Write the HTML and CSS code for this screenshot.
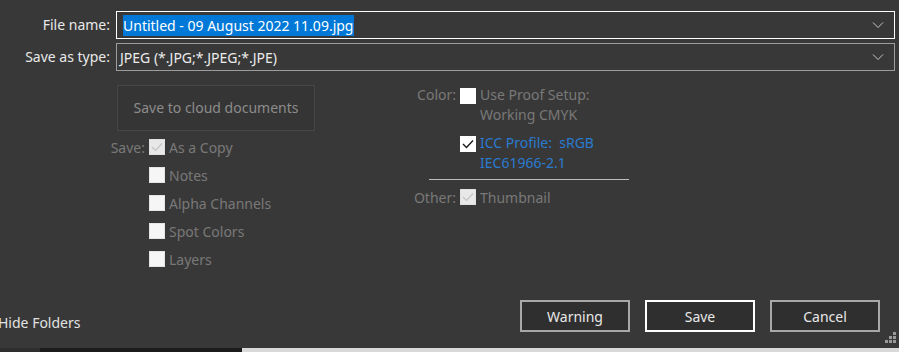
FILE: index.html
```html
<!DOCTYPE html>
<html>
<head>
  <title>Save As</title>
  <link rel="stylesheet" href="styles.css">
</head>
<body>

  <div class="dialog">

    <div class="file-fields">
      <label class="field-label" for="fileName">File name:</label>
      <div class="combo combo-focus" id="fileName">
        <span class="selected-text">Untitled - 09 August 2022 11.09.jpg</span>
        <svg class="chevron" width="12" height="8" viewBox="0 0 12 8"><path d="M1 1.5 L6 6.5 L11 1.5" fill="none" stroke="#c8c8c8" stroke-width="1"/></svg>
      </div>

      <label class="field-label" for="fileType">Save as type:</label>
      <div class="combo" id="fileType">
        <span class="combo-text">JPEG (*.JPG;*.JPEG;*.JPE)</span>
        <svg class="chevron" width="12" height="8" viewBox="0 0 12 8"><path d="M1 1.5 L6 6.5 L11 1.5" fill="none" stroke="#c8c8c8" stroke-width="1"/></svg>
      </div>
    </div>

    <div class="options">

      <div class="left-col">
        <div class="cloud-btn">Save to cloud documents</div>

        <div class="opt-grid">
          <span class="opt-label">Save:</span>
          <span class="box box-disabled-checked"><svg width="12" height="10" viewBox="0 0 12 10"><path d="M1 5 L4.5 8.5 L11 1.5" fill="none" stroke="#c4c4c4" stroke-width="1.2"/></svg></span>
          <span class="opt-text">As a Copy</span>

          <span></span>
          <span class="box"></span>
          <span class="opt-text">Notes</span>

          <span></span>
          <span class="box"></span>
          <span class="opt-text">Alpha Channels</span>

          <span></span>
          <span class="box"></span>
          <span class="opt-text">Spot Colors</span>

          <span></span>
          <span class="box"></span>
          <span class="opt-text">Layers</span>
        </div>
      </div>

      <div class="right-col">
        <div class="opt-grid tall">
          <span class="opt-label">Color:</span>
          <span class="box box-white"></span>
          <span class="opt-text">Use Proof Setup:<br>Working CMYK</span>

          <span></span>
          <span class="box box-white box-checked"><svg width="12" height="10" viewBox="0 0 12 10"><path d="M1 5 L4.5 8.5 L11 1.5" fill="none" stroke="#1a1a1a" stroke-width="1.4"/></svg></span>
          <span class="opt-text link">ICC Profile:&nbsp; sRGB<br>IEC61966-2.1</span>
        </div>

        <div class="separator"></div>

        <div class="opt-grid other-row">
          <span class="opt-label">Other:</span>
          <span class="box box-disabled-checked"><svg width="12" height="10" viewBox="0 0 12 10"><path d="M1 5 L4.5 8.5 L11 1.5" fill="none" stroke="#c4c4c4" stroke-width="1.2"/></svg></span>
          <span class="opt-text">Thumbnail</span>
        </div>
      </div>

    </div>

    <div class="footer">
      <span class="hide-folders">Hide Folders</span>
      <div class="buttons">
        <button class="btn">Warning</button>
        <button class="btn btn-default">Save</button>
        <button class="btn">Cancel</button>
      </div>
      <svg class="grip" width="12" height="12" viewBox="0 0 12 12" fill="#9a9a9a">
        <rect x="8" y="0" width="3" height="3"/>
        <rect x="4" y="4" width="3" height="3"/>
        <rect x="8" y="4" width="3" height="3"/>
        <rect x="0" y="8" width="3" height="3"/>
        <rect x="4" y="8" width="3" height="3"/>
        <rect x="8" y="8" width="3" height="3"/>
      </svg>
    </div>

    <div class="taskbar">
      <span class="tb-a"></span>
      <span class="tb-b"></span>
      <span class="tb-c"></span>
    </div>

  </div>

</body>
</html>
```

FILE: styles.css
```css
body {
  margin: 0;
  background: #383838;
  font-family: "Noto Sans", "Open Sans", sans-serif;
  font-size: 14px;
  color: #e6e6e6;
  overflow: hidden;
}

.dialog {
  height: 352px;
  display: flex;
  flex-direction: column;
}

/* File name / type rows */
.file-fields {
  display: grid;
  grid-template-columns: 110px 779px;
  column-gap: 6px;
  row-gap: 4px;
  padding-top: 11px;
}

.field-label {
  text-align: right;
  line-height: 28px;
  color: #e8e8e8;
}

.combo {
  height: 28px;
  box-sizing: border-box;
  border: 1px solid #9c9c9c;
  display: flex;
  align-items: center;
  padding: 0 10px 0 3px;
  background: #383838;
}

.combo-focus {
  border-color: #ffffff;
  padding-left: 6px;
}

.selected-text {
  background: #0078d7;
  color: #ffffff;
  line-height: 21px;
  padding-right: 1px;
}

.combo-text {
  color: #ececec;
}

.chevron {
  margin-left: auto;
}

/* Options area */
.options {
  display: flex;
  margin-top: 14px;
}

.left-col {
  width: 400px;
}

.cloud-btn {
  margin-left: 117px;
  width: 198px;
  height: 46px;
  box-sizing: border-box;
  border: 1px solid #474747;
  background: #353535;
  color: #8c8c8c;
  display: flex;
  align-items: center;
  justify-content: center;
  padding-bottom: 2px;
  margin-bottom: 2px;
}

.opt-grid {
  display: grid;
  grid-template-columns: 55px 16px auto;
  column-gap: 4px;
  grid-auto-rows: 28px;
  align-items: center;
  margin-left: 90px;
  color: #787878;
}

.right-col .opt-grid {
  margin-left: 0;
  column-gap: 4px;
  grid-template-columns: 56px 16px auto;
}

.opt-grid.tall {
  grid-auto-rows: auto;
  row-gap: 8px;
  align-items: start;
}

.opt-grid.tall .opt-text,
.opt-grid.tall .opt-label {
  line-height: 20px;
}

.opt-grid.tall .box {
  margin-top: 3px;
}

.opt-label {
  text-align: right;
}

.opt-text {
  white-space: nowrap;
}

.link {
  color: #2a7bd0;
}

.box {
  width: 16px;
  height: 16px;
  box-sizing: border-box;
  border: 1px solid #e4e4e4;
  background: #f6f6f6;
  display: flex;
  align-items: center;
  justify-content: center;
}

.box-white {
  background: #ffffff;
  border-color: #ffffff;
}

.box-disabled-checked {
  background: #e8e8e8;
  border-color: #e0e0e0;
}

.separator {
  width: 200px;
  height: 1px;
  background: #bdbdbd;
  margin: 6px 0 0 29px;
}

.other-row {
  margin-top: 3px;
}

/* Footer */
.footer {
  display: flex;
  align-items: center;
  margin-top: 27px;
  position: relative;
}

.hide-folders {
  margin-left: -2px;
  color: #e2e2e2;
  margin-top: 12px;
}

.buttons {
  display: flex;
  gap: 15px;
  margin-left: auto;
  margin-right: 19px;
}

.btn {
  width: 110px;
  height: 32px;
  box-sizing: border-box;
  background: #2f2f2f;
  border: 2px solid #a8a8a8;
  color: #e8e8e8;
  font-family: "Noto Sans", "Open Sans", sans-serif;
  font-size: 14px;
  padding: 0;
}

.btn-default {
  border-color: #ffffff;
}

.grip {
  position: absolute;
  right: 2px;
  bottom: -12px;
}

/* bottom edge strip */
.taskbar {
  margin-top: auto;
  display: flex;
  height: 4px;
}

.tb-a {
  width: 40px;
  background: #2e2e2e;
}

.tb-b {
  width: 202px;
  background: #1b1b1b;
}

.tb-c {
  flex: 1;
  background: #d9d9d9;
}
```
